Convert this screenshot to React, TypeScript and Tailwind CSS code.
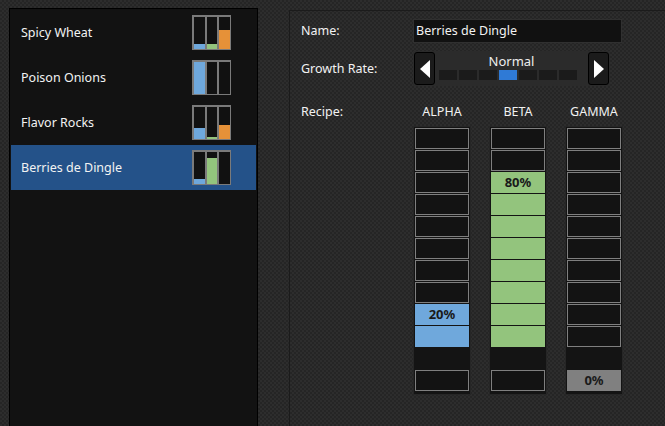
import React from "react"

type Mix = { name: string; a: number; b: number; c: number; selected?: boolean }

const mixes: Mix[] = [
  { name: "Spicy Wheat", a: 15, b: 15, c: 58 },
  { name: "Poison Onions", a: 100, b: 0, c: 0 },
  { name: "Flavor Rocks", a: 35, b: 5, c: 45 },
  { name: "Berries de Dingle", a: 17, b: 80, c: 0, selected: true },
]

type Cell = { kind: "empty" | "blank" | "fill"; color?: string; label?: string }

const e: Cell = { kind: "empty" }
const blank: Cell = { kind: "blank" }
const blue = (label?: string): Cell => ({ kind: "fill", color: "bg-[#6fa8dc]", label })
const green = (label?: string): Cell => ({ kind: "fill", color: "bg-[#93c47d]", label })

const columns: { title: string; cells: Cell[] }[] = [
  { title: "ALPHA", cells: [e, e, e, e, e, e, e, e, blue("20%"), blue(), blank, e] },
  {
    title: "BETA",
    cells: [e, e, green("80%"), green(), green(), green(), green(), green(), green(), green(), blank, e],
  },
  {
    title: "GAMMA",
    cells: [e, e, e, e, e, e, e, e, e, e, blank, { kind: "fill", color: "bg-[#808080]", label: "0%" }],
  },
]

function MiniChart({ a, b, c }: { a: number; b: number; c: number }) {
  const bars = [
    { v: a, color: "bg-[#6fa8dc]" },
    { v: b, color: "bg-[#93c47d]" },
    { v: c, color: "bg-[#e69138]" },
  ]
  return (
    <div className="flex h-[35px] w-[39px] gap-[2px] bg-[#7a7a7a] p-[2px] pb-[1px] pr-[1px]">
      {bars.map((bar, i) => (
        <div key={i} className="flex flex-1 flex-col justify-end bg-[#111111]">
          <div className={bar.color} style={{ height: `${bar.v}%` }} />
        </div>
      ))}
    </div>
  )
}

function Triangle({ dir }: { dir: "left" | "right" }) {
  return (
    <svg width="10" height="18" viewBox="0 0 10 18">
      {dir === "left" ? <polygon points="10,0 10,18 0,9" fill="#ffffff" /> : <polygon points="0,0 0,18 10,9" fill="#ffffff" />}
    </svg>
  )
}

export default function App() {
  return (
    <div
      className="flex h-[426px] w-[665px] overflow-hidden bg-[#292929] bg-[image:repeating-conic-gradient(#252525_0%_25%,#2d2d2d_0%_50%)] bg-size-[4px_4px] pl-[9px] pt-[8px] text-[12.5px] text-[#f2f2f2]"
      style={{ fontFamily: '"Noto Sans", "Open Sans", sans-serif' }}
    >
      {/* recipe list */}
      <div className="h-[440px] w-[249px] shrink-0 border border-black bg-[#121212] p-[1px]">
        {mixes.map((m) => (
          <div
            key={m.name}
            className={`flex h-[45px] items-center justify-between pl-[10px] pr-[25px] ${m.selected ? "bg-[#245289]" : ""}`}
          >
            <span className="pt-[2px]">{m.name}</span>
            <MiniChart a={m.a} b={m.b} c={m.c} />
          </div>
        ))}
      </div>

      {/* editor */}
      <div className="ml-[31px] mt-[2px] h-[440px] w-[420px] shrink-0 border-l border-t border-[#1b1b1b] pl-[11px] pt-[8px]">
        <div className="flex h-[24px] items-center">
          <span className="w-[112px] pt-[1px]">Name:</span>
          <div className="flex h-[24px] w-[209px] items-center border border-[#303030] bg-[#111111] px-[2px] pt-[1px]">
            Berries de Dingle
          </div>
        </div>

        <div className="mt-[8px] flex h-[35px] items-center">
          <span className="w-[112px] pt-[1px]">Growth Rate:</span>
          <div className="flex h-[35px] w-[197px] items-center bg-[#2b2b2b] px-[1px]">
            <button className="flex h-[33px] w-[21px] items-center justify-center rounded-[3px] border border-black bg-[#1b1b1b]">
              <Triangle dir="left" />
            </button>
            <div className="flex h-full flex-1 flex-col items-center pt-[3px]">
              <span className="text-[13px] leading-[15px] text-[#eeeeee]">Normal</span>
              <div className="mr-[8px] mt-[1px] flex gap-[2px]">
                {[0, 1, 2, 3, 4, 5, 6].map((i) => (
                  <div key={i} className={`h-[10px] w-[18px] ${i === 3 ? "bg-[#2f7ad6]" : "bg-[#1b1b1b]"}`} />
                ))}
              </div>
            </div>
            <button className="flex h-[33px] w-[21px] items-center justify-center rounded-[3px] border border-black bg-[#1b1b1b]">
              <Triangle dir="right" />
            </button>
          </div>
        </div>

        <div className="mt-[18px] flex">
          <span className="w-[112px] leading-[16px]">Recipe:</span>
          <div className="flex gap-[18px]">
            {columns.map((col) => (
              <div key={col.title} className="flex w-[58px] flex-col items-center">
                <span className="leading-[16px]">{col.title}</span>
                <div className="mt-[6px] flex w-[58px] flex-col gap-[1px] border border-[#262626] bg-[#141414] p-[1px] pb-[3px]">
                  {col.cells.map((cell, i) =>
                    cell.kind === "empty" ? (
                      <div key={i} className="h-[21px] border border-[#7f7f7f] bg-[#131313]" />
                    ) : cell.kind === "blank" ? (
                      <div key={i} className="h-[21px]" />
                    ) : (
                      <div
                        key={i}
                        className={`flex h-[21px] items-center justify-center text-[13px] font-bold text-[#1a1a1a] ${cell.color}`}
                      >
                        {cell.label}
                      </div>
                    )
                  )}
                </div>
              </div>
            ))}
          </div>
        </div>
      </div>
    </div>
  )
}
